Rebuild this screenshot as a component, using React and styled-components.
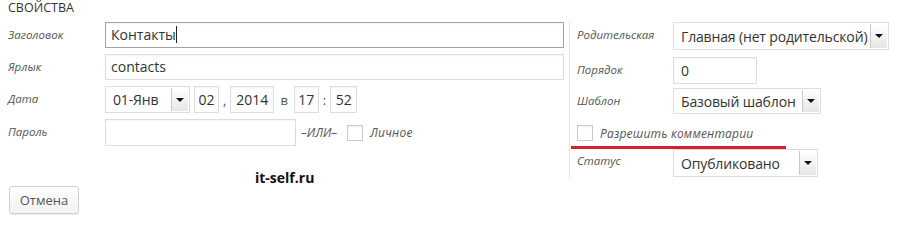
import styled, { createGlobalStyle } from "styled-components";

const GlobalStyle = createGlobalStyle`
  html, body {
    margin: 0;
    padding: 0;
    background: #fff;
  }
  body {
    font-family: "Open Sans", "Liberation Sans", sans-serif;
    color: #333;
  }
`;

const Page = styled.div`
  width: 901px;
  height: 219px;
  padding: 0 0 0 8px;
  box-sizing: border-box;
  overflow: hidden;
`;

const Heading = styled.div`
  font-size: 12.5px;
  line-height: 16px;
  height: 21px;
  color: #333;
`;

const Columns = styled.div`
  display: flex;
  align-items: flex-start;
`;

const LeftCol = styled.div`
  width: 556px;
  padding-top: 1px;
`;

const RightCol = styled.div`
  margin-left: 5px;
  margin-top: 1px;
  border-left: 1px solid #e2e2e2;
  padding-left: 7px;
  width: 320px;
  height: 157px;
  box-sizing: border-box;
`;

const Row = styled.div`
  display: flex;
  align-items: center;
  height: ${(p) => p.$h || 26}px;
  margin-bottom: ${(p) => p.$gap ?? 6}px;
`;

const Label = styled.div`
  width: ${(p) => p.$w || 97}px;
  flex-shrink: 0;
  align-self: flex-start;
  padding-top: ${(p) => p.$top ?? 5}px;
  font-size: 11.5px;
  font-style: italic;
  color: #555;
`;

const Input = styled.div`
  box-sizing: border-box;
  width: ${(p) => p.$w}px;
  height: ${(p) => p.$h || 26}px;
  border: 1px solid ${(p) => (p.$focus ? "#a2a2a2" : "#dddddd")};
  box-shadow: inset 0 1px 2px rgba(0, 0, 0, 0.05);
  background: #fff;
  font-size: 14px;
  line-height: ${(p) => (p.$h || 26) - 2}px;
  padding: 0 ${(p) => p.$pad ?? 5}px;
  color: #333;
  white-space: nowrap;
  text-align: ${(p) => p.$align || "left"};
`;

const Caret = styled.span`
  display: inline-block;
  width: 1px;
  height: 17px;
  background: #222;
  vertical-align: -3px;
`;

const SelectBox = styled.div`
  box-sizing: border-box;
  width: ${(p) => p.$w}px;
  height: ${(p) => p.$h || 27}px;
  border: 1px solid #dddddd;
  background: #fff;
  display: flex;
  align-items: stretch;
  font-size: 14px;
  letter-spacing: -0.15px;
  color: #333;
`;

const SelectText = styled.div`
  flex: 1;
  padding-left: 7px;
  display: flex;
  align-items: center;
  white-space: nowrap;
  overflow: hidden;
`;

const ArrowBtn = styled.div`
  width: 16px;
  flex-shrink: 0;
  margin: 1px 1px 1px 0;
  border-left: 1px solid #c8c8c8;
  background: linear-gradient(#ffffff, #e6e6e6);
  display: flex;
  align-items: center;
  justify-content: center;
  &::after {
    content: "";
    border-left: 4px solid transparent;
    border-right: 4px solid transparent;
    border-top: 4px solid #111;
  }
`;

const Sep = styled.span`
  font-size: 13px;
  color: #555;
  padding: 0 ${(p) => p.$px ?? 4}px;
`;

const Or = styled.span`
  font-size: 12px;
  font-style: italic;
  color: #555;
  margin: 0 10px 0 5px;
`;

const Check = styled.span`
  display: inline-block;
  width: 16px;
  height: 16px;
  box-sizing: border-box;
  border: 1px solid #c9c9c9;
  background: #fff;
  box-shadow: inset 0 1px 2px rgba(0, 0, 0, 0.05);
  flex-shrink: 0;
`;

const CheckLabel = styled.span`
  font-size: 12px;
  font-style: italic;
  color: #555;
  margin-left: 7px;
  letter-spacing: 0.2px;
`;

const Watermark = styled.div`
  padding-left: 247px;
  margin-top: 22px;
  font-size: 14px;
  font-weight: bold;
  color: #111;
  height: 18px;
`;

const RedLine = styled.div`
  height: 3px;
  width: 215px;
  margin-left: -6px;
  background: #d3222b;
`;

const Button = styled.button`
  display: block;
  margin-top: 0px;
  margin-left: 1px;
  width: 70px;
  height: 28px;
  box-sizing: border-box;
  border: 1px solid #cfcfcf;
  border-radius: 3px;
  background: linear-gradient(#fefefe, #f2f2f2);
  box-shadow: 0 1px 0 rgba(0, 0, 0, 0.06);
  font-family: "Open Sans", "Liberation Sans", sans-serif;
  font-size: 13px;
  color: #555;
  padding: 0;
`;

const Select = ({ w, h, children }) => (
  <SelectBox $w={w} $h={h}>
    <SelectText>{children}</SelectText>
    <ArrowBtn />
  </SelectBox>
);

export default function App() {
  return (
    <Page>
      <GlobalStyle />
      <Heading>СВОЙСТВА</Heading>
      <Columns>
        <LeftCol>
          <Row>
            <Label>Заголовок</Label>
            <Input $w={459} $focus>
              Контакты<Caret />
            </Input>
          </Row>
          <Row>
            <Label>Ярлык</Label>
            <Input $w={459}>contacts</Input>
          </Row>
          <Row $h={27}>
            <Label>Дата</Label>
            <Select w={85} h={27}>01-Янв</Select>
            <Input $w={25} $h={27} $pad={0} $align="center" style={{ marginLeft: 4 }}>02</Input>
            <Sep>,</Sep>
            <Input $w={44} $h={27} $pad={0} $align="center">2014</Input>
            <Sep $px={6}>в</Sep>
            <Input $w={25} $h={27} $pad={0} $align="center">17</Input>
            <Sep>:</Sep>
            <Input $w={27} $h={27} $pad={0} $align="center">52</Input>
          </Row>
          <Row $h={27}>
            <Label>Пароль</Label>
            <Input $w={191} $h={27} />
            <Or>–ИЛИ–</Or>
            <Check />
            <CheckLabel>Личное</CheckLabel>
          </Row>
          <Watermark>it-self.ru</Watermark>
        </LeftCol>
        <RightCol>
          <Row $h={28} $gap={7}>
            <Label $w={96}>Родительская</Label>
            <Select w={223} h={28}>Главная (нет родительской)</Select>
          </Row>
          <Row $h={27} $gap={4}>
            <Label $w={96}>Порядок</Label>
            <Input $w={84} $h={27} $pad={7}>0</Input>
          </Row>
          <Row $h={26} $gap={11}>
            <Label $w={96}>Шаблон</Label>
            <Select w={148} h={26}>Базовый шаблон</Select>
          </Row>
          <Row $h={16} $gap={5}>
            <Check />
            <CheckLabel>Разрешить комментарии</CheckLabel>
          </Row>
          <RedLine />
          <Row $h={28} $gap={0}>
            <Label $w={96} $top={4}>Статус</Label>
            <Select w={145} h={28}>Опубликовано</Select>
          </Row>
        </RightCol>
      </Columns>
      <Button>Отмена</Button>
    </Page>
  );
}
